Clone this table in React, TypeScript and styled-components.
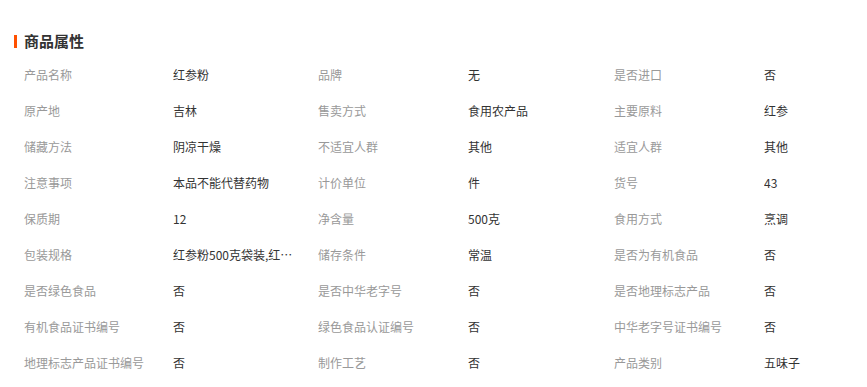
import React from "react";
import styled, { createGlobalStyle } from "styled-components";

const GlobalStyle = createGlobalStyle`
  body {
    margin: 0;
    background: #fff;
    font-family: "Noto Sans CJK SC", "Noto Sans", sans-serif;
  }
`;

const Section = styled.section`
  width: 867px;
  height: 387px;
  overflow: hidden;
  padding: 29px 0 0 14px;
  box-sizing: border-box;
`;

const Title = styled.h3`
  display: flex;
  align-items: center;
  gap: 7px;
  margin: 0 0 4px 0;
  height: 24px;
  font-size: 15px;
  font-weight: 700;
  color: #333;
  line-height: 24px;

  &::before {
    content: "";
    width: 3px;
    height: 13px;
    background: #ff5000;
  }
`;

const Grid = styled.div`
  display: grid;
  grid-template-columns: 149px 145px 150px 146px 150px 1fr;
  padding-left: 10px;
  font-size: 12px;
`;

const Cell = styled.div<{ $label?: boolean }>`
  height: 36px;
  line-height: 36px;
  color: ${(p) => (p.$label ? "#999" : "#333")};
  white-space: nowrap;
  overflow: hidden;
  text-overflow: ellipsis;
  padding-right: ${(p) => (p.$label ? "0" : "24px")};
`;

const props: [string, string][] = [
  ["产品名称", "红参粉"],
  ["品牌", "无"],
  ["是否进口", "否"],
  ["原产地", "吉林"],
  ["售卖方式", "食用农产品"],
  ["主要原料", "红参"],
  ["储藏方法", "阴凉干燥"],
  ["不适宜人群", "其他"],
  ["适宜人群", "其他"],
  ["注意事项", "本品不能代替药物"],
  ["计价单位", "件"],
  ["货号", "43"],
  ["保质期", "12"],
  ["净含量", "500克"],
  ["食用方式", "烹调"],
  ["包装规格", "红参粉500克袋装,红参粉250克袋装"],
  ["储存条件", "常温"],
  ["是否为有机食品", "否"],
  ["是否绿色食品", "否"],
  ["是否中华老字号", "否"],
  ["是否地理标志产品", "否"],
  ["有机食品证书编号", "否"],
  ["绿色食品认证编号", "否"],
  ["中华老字号证书编号", "否"],
  ["地理标志产品证书编号", "否"],
  ["制作工艺", "否"],
  ["产品类别", "五味子"],
];

export default function App() {
  return (
    <>
      <GlobalStyle />
      <Section>
        <Title>商品属性</Title>
        <Grid>
          {props.map(([k, v]) => (
            <React.Fragment key={k}>
              <Cell $label>{k}</Cell>
              <Cell>{v}</Cell>
            </React.Fragment>
          ))}
        </Grid>
      </Section>
    </>
  );
}
